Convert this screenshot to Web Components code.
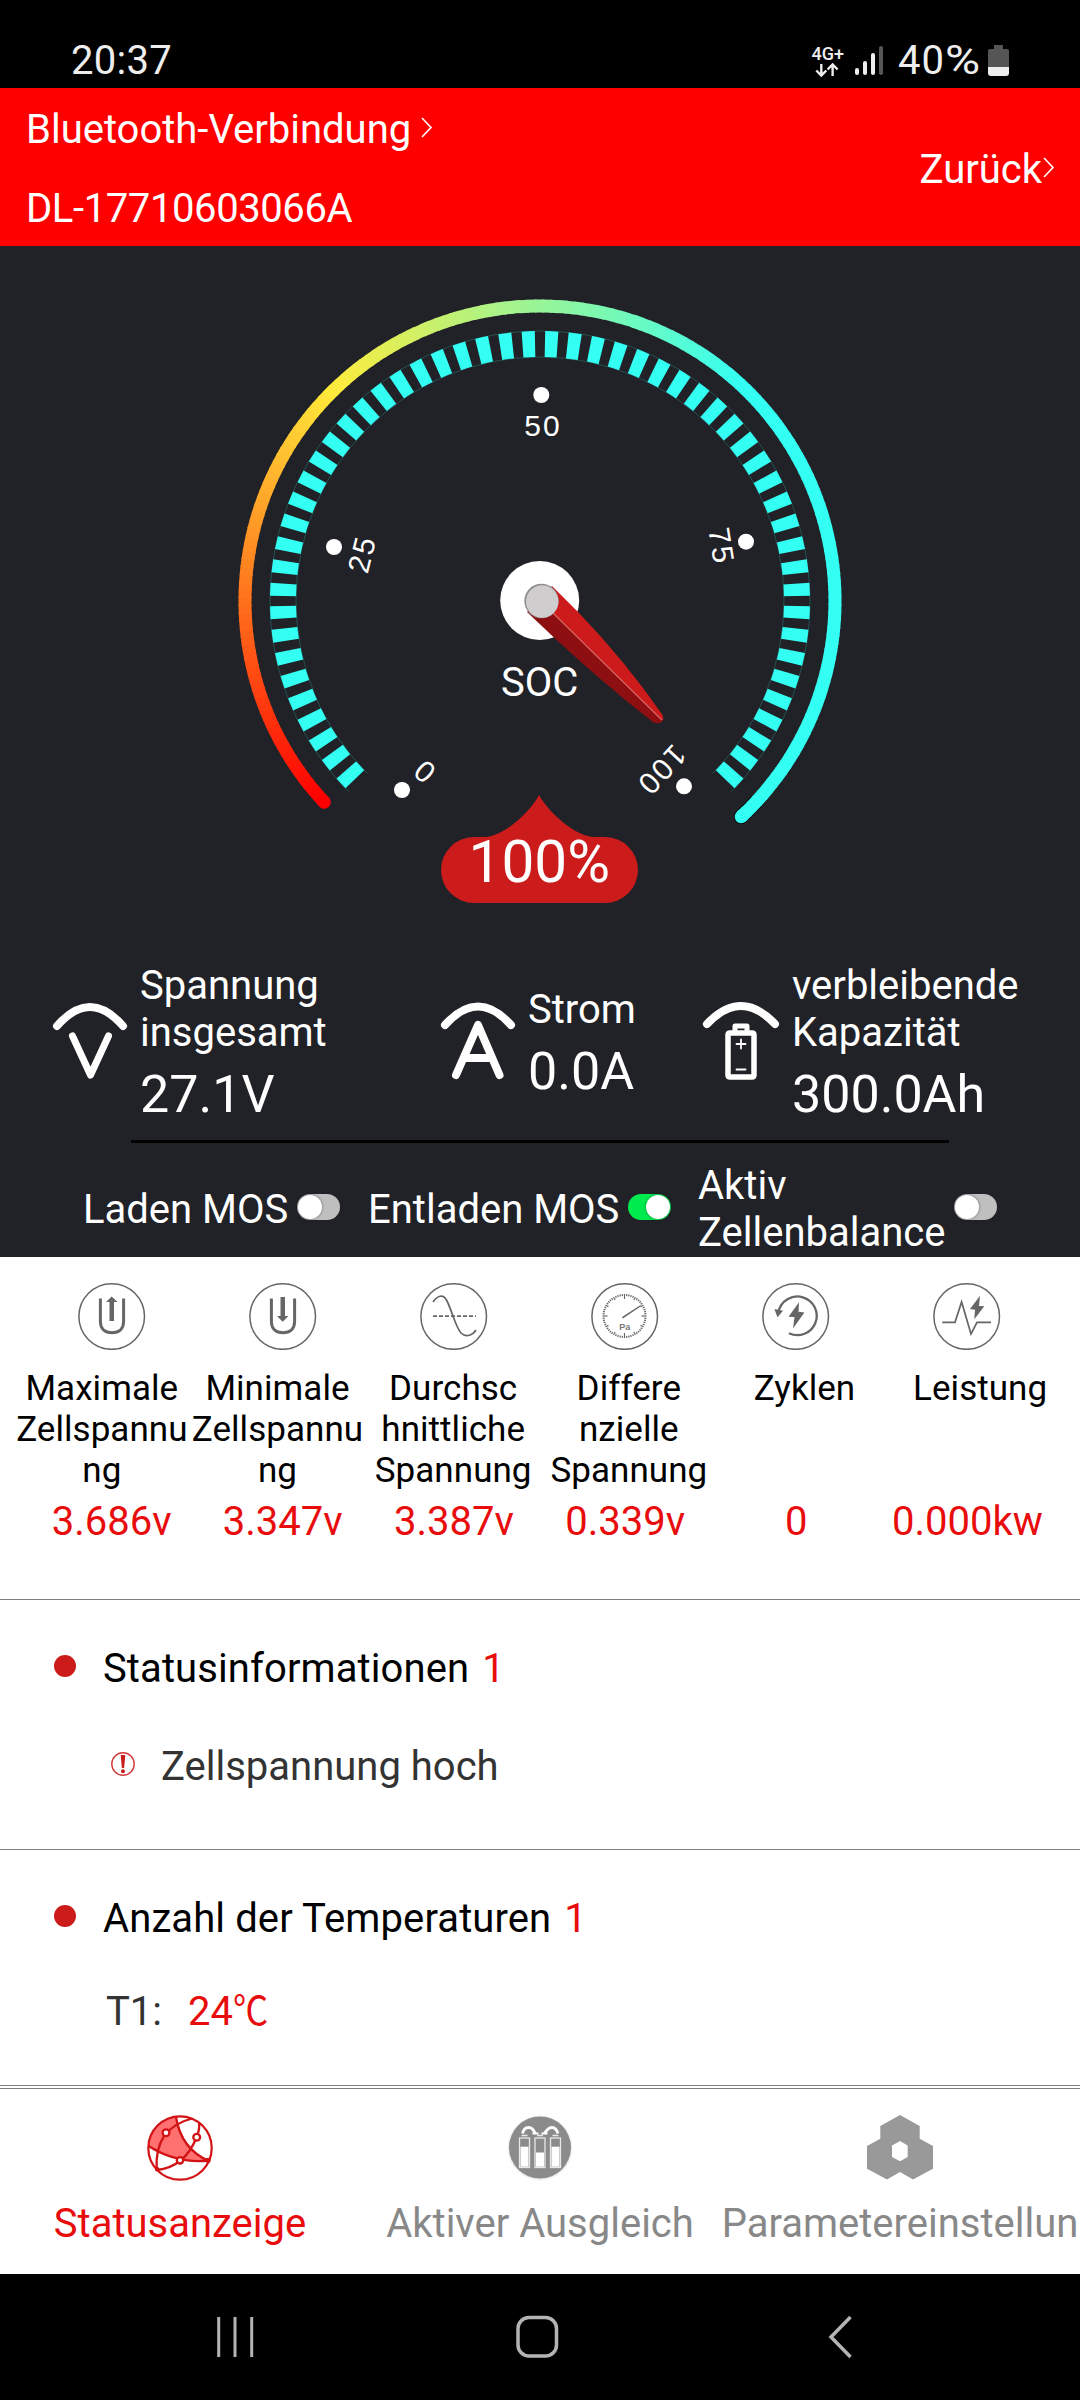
<!DOCTYPE html>
<html lang="de">
<head>
<meta charset="UTF-8">
<title>Batterie</title>
<style>
    body {
        margin: 0;
        width: 1080px;
        height: 2400px;
        overflow: hidden;
        background: #fff;
        font-family: Roboto, "Noto Sans CJK SC", sans-serif;
        font-size: 40px;
        line-height: 47px;
    }
</style>
</head>
<body>
<battery-app></battery-app>

<script>
// Base class: every element only needs a template() method
class BaseElement extends HTMLElement {
    constructor() {
        super();
        this.attachShadow({ mode: 'open' });
    }

    connectedCallback() {
        this.shadowRoot.innerHTML = this.template();
    }
}

// Android status bar
class StatusBar extends BaseElement {
    template() {
        return `
            <style>
                :host {
                    display: flex;
                    justify-content: space-between;
                    height: 51px;
                    padding: 37px 71px 0 71px;
                    background: #000;
                    color: #eee;
                }
                .time { letter-spacing: .3px; }
                .right { display: flex; }
                .pct { width: 90px; padding-left: 12px; letter-spacing: 1px; }
                .pct span { display: inline-block; transform: scaleX(1.2); transform-origin: left; }
            </style>
            <span class="time">20:37</span>
            <div class="right">
                <svg width="76" height="51" viewBox="810 37 76 51" fill="#eee">
                    <text x="811.5" y="60" font-size="18" font-weight="500" font-family="Roboto">4G+</text>
                    <path d="M821.3 64v11M816.3 70.5l5 5 5-5M832.6 76V65M827.6 69.5l5-5 5 5" fill="none" stroke="#eee" stroke-width="2.4"/>
                    <rect x="855" y="68" width="4" height="7" rx="2"/>
                    <rect x="863" y="61" width="4" height="14" rx="2"/>
                    <rect x="871" y="53" width="4" height="22" rx="2"/>
                    <rect x="879" y="46" width="4" height="29" rx="2" fill="#555"/>
                </svg>
                <div class="pct">40<span>%</span></div>
                <svg width="21" height="51" viewBox="988 37 21 51">
                    <path d="M994 45h9v4h4a2 2 0 0 1 2 2v16h-21V51a2 2 0 0 1 2-2h4z" fill="#555"/>
                    <path d="M988 67h21v6a3 3 0 0 1-3 3h-15a3 3 0 0 1-3-3z" fill="#eee"/>
                </svg>
            </div>
        `;
    }
}
customElements.define('status-bar', StatusBar);

// Red header with connection name and back link
class ConnectionHeader extends BaseElement {
    template() {
        return `
            <style>
                :host {
                    display: flex;
                    justify-content: space-between;
                    height: 158px;
                    box-sizing: border-box;
                    padding: 18px 24px 0 26px;
                    background: #f00;
                    color: #fff;
                }
                .left { display: flex; flex-direction: column; gap: 32px; }
                .link { display: flex; }
                .back { padding-top: 40px; }
                ::slotted(*) { letter-spacing: -.4px; }
            </style>
            <div class="left">
                <div class="link">
                    <span>Bluetooth-Verbindung</span>
                    <svg width="14" height="47" style="margin-left:9px"><path d="M2 12l9 9.5-9 9.5" fill="none" stroke="#fff" stroke-width="1.6"/></svg>
                </div>
                <slot></slot>
            </div>
            <div class="link back">
                <span>Zurück</span>
                <svg width="14" height="47"><path d="M2 12l9 9.5-9 9.5" fill="none" stroke="#fff" stroke-width="1.6"/></svg>
            </div>
        `;
    }
}
customElements.define('connection-header', ConnectionHeader);

// State of charge gauge
class SocGauge extends BaseElement {
    point(r, deg) {
        const a = deg * Math.PI / 180;
        return (540 + r * Math.cos(a)).toFixed(2) + ' ' + (601 + r * Math.sin(a)).toFixed(2);
    }

    arc(r, from, to) {
        const large = to - from > 180 ? 1 : 0;
        return `M${this.point(r, from)}A${r} ${r} 0 ${large} 1 ${this.point(r, to)}`;
    }

    color(t) {
        const stops = [[0, 255, 0, 0], [0.325, 255, 235, 59], [0.65, 51, 255, 243], [1, 51, 255, 243]];
        let i = 0;
        while (i < 2 && t > stops[i + 1][0]) i++;
        const a = stops[i], b = stops[i + 1];
        const k = (t - a[0]) / (b[0] - a[0]);
        return `rgb(${[1, 2, 3].map(n => Math.round(a[n] + (b[n] - a[n]) * k)).join()})`;
    }

    template() {
        const start = 137, end = 407;
        let ring = '';
        for (let d = start; d < end; d += 1.5) {
            ring += `<path d="${this.arc(295, d, Math.min(d + 1.8, end))}" stroke="${this.color((d - start) / 270)}"/>`;
        }
        let ticks = '';
        for (let d = 137.5; d < 405; d += 5) {
            ticks += this.arc(257, d - 1.4, d + 1.4);
        }
        return `
            <style>
                :host { display: block; height: 704px; }
                svg { display: block; }
                .num { font: 30px "Liberation Sans", sans-serif; letter-spacing: 2px; text-anchor: middle; }
            </style>
            <svg width="1080" height="704" viewBox="0 246 1080 704" fill="#fff">
                <path d="${this.arc(295, 403, 407)}" fill="none" stroke="#000" stroke-width="14.5" stroke-linecap="round"/>
                <g fill="none" stroke-width="13">
                    <path d="${this.arc(295, 137, 137.4)}" stroke="#f00" stroke-linecap="round"/>
                    <path d="${this.arc(295, 406.5, 407)}" stroke="#33fff3" stroke-linecap="round"/>
                    ${ring}
                </g>
                <path d="${ticks}" fill="none" stroke="#33fff3" stroke-width="26"/>
                <path d="${this.arc(270, 135, 405)}${this.arc(244, 135, 405)}" fill="none" stroke="#33fff3" stroke-width=".6" opacity=".35"/>

                <circle cx="402" cy="790" r="8"/>
                <circle cx="334" cy="547" r="8"/>
                <circle cx="541.3" cy="395" r="8"/>
                <circle cx="746" cy="541.7" r="8"/>
                <circle cx="684" cy="786.3" r="8"/>
                <text class="num" x="543" y="435.5">50</text>
                <text class="num" transform="translate(361.5 555) rotate(-76)" x="1" y="10.5">25</text>
                <text class="num" transform="translate(721.5 545) rotate(81)" x="1" y="10.5">75</text>
                <text class="num" transform="translate(425 771.5) rotate(40)" x="1" y="10.5">0</text>
                <text class="num" transform="translate(662.5 769.5) rotate(133)" x="1" y="10.5">100</text>

                <circle cx="539.7" cy="600.5" r="39.5"/>
                <path d="M552 586L579 613Q626 662 662.500 715Q665 721 659.500 721L541 600z" fill="#cd1b1b"/>
                <path d="M527 612L554.500 638Q604 684 653.500 722.500Q661 725 663 720L541 600z" fill="#8d0f11"/>
                <path d="M552 612L662 720" stroke="#e0605f" stroke-width="1.4"/>
                <circle cx="541.5" cy="601" r="17.2" fill="#8f8d8e"/>
                <circle cx="542.2" cy="601.5" r="16.2" fill="#cfcdce"/>
                <text x="539.6" y="696" font-size="40" text-anchor="middle">SOC</text>

                <path d="M539 795C549 813 576 837 595 837H605A33 33 0 0 1 605 903H474A33 33 0 0 1 474 837H485C502 837 530 813 539 795z" fill="#cc1b1b"/>
                <text x="539.3" y="881.7" font-size="58.5" text-anchor="middle">100%</text>
            </svg>
        `;
    }
}
customElements.define('soc-gauge', SocGauge);

// Icon + label + value. The icon shape comes from the "kind" attribute
class StatItem extends BaseElement {
    template() {
        const icons = {
            volt: `<path d="M7 27Q40-11 73 27" stroke-width="8"/><path d="M22.500 37L40.500 76L58.500 37" stroke-width="7"/>`,
            ampere: `<path d="M7 26Q40-11 73 26" stroke-width="8"/><path d="M18 76L40 26L61.500 76M27.500 59H53" stroke-width="8"/>`,
            capacity: `<path d="M5 25Q39-11 73 25" stroke-width="8"/>
                <path d="M28 34h22q2 0 2 2v40q0 2-2 2H28q-2 0-2-2V36q0-2 2-2z" stroke-width="5.500"/>
                <path d="M33 33v-6h12v6" stroke-width="5"/>
                <path d="M39 40.500v9M34.500 45h9M34.500 70.500h9" stroke-width="1.800"/>`
        };
        return `
            <style>
                :host { display: flex; align-items: center; gap: 10px; white-space: nowrap; }
                svg { flex: none; margin-top: -6px; }
                .value { margin-top: 8px; font-size: 52px; line-height: 61px; }
            </style>
            <svg width="80" height="84" fill="none" stroke="#fff" stroke-linecap="round" stroke-linejoin="round">${icons[this.getAttribute('kind')]}</svg>
            <div>
                <slot></slot>
                <div class="value">${this.getAttribute('value')}</div>
            </div>
        `;
    }
}
customElements.define('stat-item', StatItem);

// Label with a small switch behind it
class MosSwitch extends BaseElement {
    template() {
        const on = this.hasAttribute('on');
        return `
            <style>
                :host { display: flex; align-items: center; gap: 9px; white-space: nowrap; }
                .track {
                    display: flex;
                    justify-content: ${on ? 'flex-end' : 'flex-start'};
                    width: 43px;
                    height: 26px;
                    margin-top: -4px;
                    border-radius: 13px;
                    box-sizing: border-box;
                    padding: 1px;
                    background: ${on ? '#00eb4e' : '#bfbfbf'};
                }
                .knob {
                    width: 24px;
                    height: 24px;
                    border-radius: 50%;
                    background: #fff;
                    box-shadow: 0 0 3px rgba(0, 0, 0, .45);
                }
            </style>
            <div><slot></slot></div>
            <div class="track"><div class="knob"></div></div>
        `;
    }
}
customElements.define('mos-switch', MosSwitch);

// Row of six cell metrics: icons, names, values
class CellMetrics extends BaseElement {
    template() {
        const tube = 'M22.400 16.500V39.500C22.400 47 27 50.700 34 50.700S45.600 47 45.600 39.500V16.500';
        let marks = '';
        for (let i = 0; i < 60; i++) {
            const long = i % 15 === 0 ? 5 : i % 5 === 0 ? 3.5 : 2;
            marks += `<path d="M33.500 12v${long}" transform="rotate(${i * 6} 33.500 34)"/>`;
        }
        const items = [
            ['Maximale<br>Zellspannu<br>ng', '3.686v',
                `<path d="${tube}" stroke-width="3"/><path d="M31.500 39V20h-3.500l5.700-5.500L39.500 20h-3.500v19z" fill="#666" stroke="none"/>`],
            ['Minimale<br>Zellspannu<br>ng', '3.347v',
                `<path d="${tube}" stroke-width="3"/><path d="M31.500 15v19H28l5.700 5.800L39.500 34h-3.500V15z" fill="#666" stroke="none"/>`],
            ['Durchsc<br>hnittliche<br>Spannung', '3.387v',
                `<path d="M13 20C17 14 23 11 27 19C32 29 36 46 41 51C46 56 53 53 56 48"/><path d="M13 34.200H56" stroke-dasharray="4 2"/>`],
            ['Differe<br>nzielle<br>Spannung', '0.339v',
                `<g stroke-width="1.200">${marks}</g><path d="M31.500 36L49.600 23.700L33 34.500z" fill="#666" stroke-width="1.300"/>
                 <text x="33.700" y="47.500" font-size="9" font-weight="bold" font-family="Liberation Sans" text-anchor="middle" fill="#777" stroke="none">Pa</text>`],
            ['Zyklen', '0',
                `<path d="M27 51.200A19.300 19.300 0 1 0 16.500 30" stroke-width="2.300"/><path d="M12.400 27L21 28.700L15.500 35.300z" fill="#666" stroke="none"/>
                 <path d="M37 20.300L26.500 34.700L32.500 35L31 46.500L42.400 30.500L36.500 29.700z" fill="#666" stroke="none"/>`],
            ['Leistung', '0.000kw',
                `<path d="M9.300 40.300H22L28.600 20L38 52L44 40.300H58"/><path d="M47 13.700L37 27L42 27.700L41.300 37.300L51.300 24.300L46 24z" fill="#666" stroke="none"/>`]
        ];
        return `
            <style>
                :host { display: block; height: 342px; box-sizing: border-box; padding-top: 25px; }
                .row { display: grid; grid-template-columns: repeat(6, 1fr); margin: 0 27px 0 26px; text-align: center; }
                .row svg { display: block; margin: 0 auto; }
                .names { margin: 18px 12px 7px 14px; height: 123px; font-size: 35px; line-height: 41px; letter-spacing: .05px; color: #000; }
                .values { color: #e80c0c; }
            </style>
            <div class="row">
                ${items.map(i => `<svg width="68" height="68" fill="none" stroke="#666" stroke-width="1.700"><circle cx="33.700" cy="34.500" r="32.800" stroke-width="1.500"/>${i[2]}</svg>`).join('')}
            </div>
            <div class="row names">${items.map(i => `<div>${i[0]}</div>`).join('')}</div>
            <div class="row values">${items.map(i => `<div>${i[1]}</div>`).join('')}</div>
        `;
    }
}
customElements.define('cell-metrics', CellMetrics);

// Section with bullet, title and counter, details go in the slot
class InfoSection extends BaseElement {
    template() {
        return `
            <style>
                :host { display: block; box-sizing: border-box; border-top: 1px solid #808080; padding-top: 45px; color: #333; }
                .head { display: flex; align-items: center; color: #000; letter-spacing: .1px; }
                .bullet { width: 22px; height: 22px; margin: -6px 27px 0 54px; border-radius: 50%; background: #cc1b1b; }
                .count { margin-left: 13px; color: #e80c0c; }
            </style>
            <div class="head">
                <div class="bullet"></div>
                <span>${this.getAttribute('title-text')}</span>
                <span class="count">${this.getAttribute('count')}</span>
            </div>
            <slot></slot>
        `;
    }
}
customElements.define('info-section', InfoSection);

// Bottom tab
class TabItem extends BaseElement {
    template() {
        const icons = {
            status: `
                <path d="M29 2A31.500 31.500 0 0 0 1.500 31Q30 49 61 46Q38 36 29 2z" fill="#ff7070"/>
                <g fill="none" stroke="#d21214" stroke-width="2.300">
                    <circle cx="33" cy="33" r="31.700" stroke-width="2.200"/>
                    <path d="M29 2Q34 34 62 46M1.500 31Q30 49 62 45.500M45 3.500Q7 13 9.700 55Q38 52 49.700 22Q53 14 52 8"/>
                    <g fill="#fff"><circle cx="19" cy="17.700" r="3.400"/><circle cx="49.700" cy="22.300" r="3.400"/><circle cx="33" cy="45.300" r="3.200"/></g>
                    <circle cx="61" cy="45.300" r="1.500"/><circle cx="10" cy="54" r="1"/>
                </g>`,
            balance: `
                <circle cx="33" cy="33" r="32.500" fill="#f1f1f1"/>
                <circle cx="33" cy="32.500" r="31" fill="#8b8b8b"/>
                <g fill="none" stroke="#e8e8e8" stroke-width="1.300">
                    <rect x="12.500" y="23" width="10" height="29.500"/><rect x="28" y="23" width="10" height="29.500"/><rect x="43.500" y="23" width="10" height="29.500"/>
                    <path d="M14.500 20.500h6M30 20.500h6M45.500 20.500h6"/>
                    <path d="M15.500 18.500Q17 12.500 21.500 12.500T28 18.500M51 18.500Q49 12.500 45 12.500T37.500 18.500" stroke="#fff" stroke-width="2.800"/>
                    <path d="M25.500 18.500h6M34.500 18.500h6" stroke="#fff" stroke-width="2"/>
                </g>
                <g fill="#fff"><rect x="13.500" y="31.700" width="8" height="20"/><rect x="29" y="37.500" width="8" height="14.200"/><rect x="44.500" y="31.700" width="8" height="20"/></g>`,
            settings: `
                <path fill="#999" fill-rule="evenodd" d="M33 0L52.700 11V23.700L66 31V53.700L46 64.500L33 57L20 64.500L0 53.700V31L13.300 23.700V11zM33 26L25 30.500V42L33 46.300L40.700 42V30.500z"/>`
        };
        return `
            <style>
                :host { display: flex; flex-direction: column; align-items: center; overflow: hidden; white-space: nowrap; color: #888; }
                :host([active]) { color: #e80c0c; }
                svg { flex: none; margin: 26px 0 19px; }
                .label { max-width: 360px; }
            </style>
            <svg width="66" height="66">${icons[this.getAttribute('kind')]}</svg>
            <div class="label"><slot></slot></div>
        `;
    }
}
customElements.define('tab-item', TabItem);

// Android navigation bar
class NavButtons extends BaseElement {
    template() {
        return `
            <style>
                :host { display: block; height: 126px; background: #000; }
            </style>
            <svg width="1080" height="126" viewBox="0 2274 1080 126" fill="none" stroke="#b4b4b4" stroke-width="3.500">
                <path d="M218.700 2317v40M235 2317v40M251.700 2317v40" stroke-width="3"/>
                <rect x="518" y="2317.500" width="38.500" height="38.500" rx="11"/>
                <path d="M850.500 2317L831 2337L850.500 2357"/>
            </svg>
        `;
    }
}
customElements.define('nav-buttons', NavButtons);

// The whole screen
class BatteryApp extends BaseElement {
    template() {
        return `
            <style>
                :host { display: block; }
                .dark { height: 1011px; background: #212227; color: #fff; }
                .stats { display: grid; grid-template-columns: 388px 264px 1fr; height: 163px; padding: 12px 0 15px 50px; }
                .line { width: 818px; height: 3px; margin-left: 131px; background: #000; }
                .switches { display: grid; grid-template-columns: 285px 330px 1fr; padding: 19px 0 0 83px; }
                .alarm { display: flex; align-items: center; margin: 51px 0 0 111px; }
                .alarm svg { margin: -6px 26px 0 0; }
                .temp { margin: 46px 0 0 106px; }
                .temp span { margin-left: 26px; color: #e80c0c; }
                .temp i { display: inline-block; font-style: normal; transform: scaleX(.88); transform-origin: left; }
                .tabs { display: grid; grid-template-columns: repeat(3, 360px); height: 185px; border-top: 1px solid #808080; margin-top: 2px; }
                .end { border-bottom: 1px solid #808080; }
            </style>
            <status-bar></status-bar>
            <connection-header><span>DL-17710603066A</span></connection-header>
            <div class="dark">
                <soc-gauge></soc-gauge>
                <div class="stats">
                    <stat-item kind="volt" value="27.1V">Spannung<br>insgesamt</stat-item>
                    <stat-item kind="ampere" value="0.0A">Strom</stat-item>
                    <stat-item kind="capacity" value="300.0Ah">verbleibende<br>Kapazität</stat-item>
                </div>
                <div class="line"></div>
                <div class="switches">
                    <mos-switch>Laden MOS</mos-switch>
                    <mos-switch on>Entladen MOS</mos-switch>
                    <mos-switch>Aktiv<br>Zellenbalance</mos-switch>
                </div>
            </div>
            <cell-metrics></cell-metrics>
            <info-section title-text="Statusinformationen" count="1" style="height:250px">
                <div class="alarm">
                    <svg width="24" height="24"><circle cx="12" cy="12" r="11.200" fill="none" stroke="#d03a3a" stroke-width="1.400"/><path d="M9.700 3h4.600l-1.200 13h-2.200z" fill="#c81b1b"/><circle cx="12" cy="19.300" r="2" fill="#c81b1b"/></svg>
                    <span>Zellspannung hoch</span>
                </div>
            </info-section>
            <info-section class="end" title-text="Anzahl der Temperaturen" count="1" style="height:237px">
                <div class="temp">T1:<span>24<i>℃</i></span></div>
            </info-section>
            <div class="tabs">
                <tab-item kind="status" active>Statusanzeige</tab-item>
                <tab-item kind="balance">Aktiver Ausgleich</tab-item>
                <tab-item kind="settings">Parametereinstellun</tab-item>
            </div>
            <nav-buttons></nav-buttons>
        `;
    }
}
customElements.define('battery-app', BatteryApp);
</script>
</body>
</html>
